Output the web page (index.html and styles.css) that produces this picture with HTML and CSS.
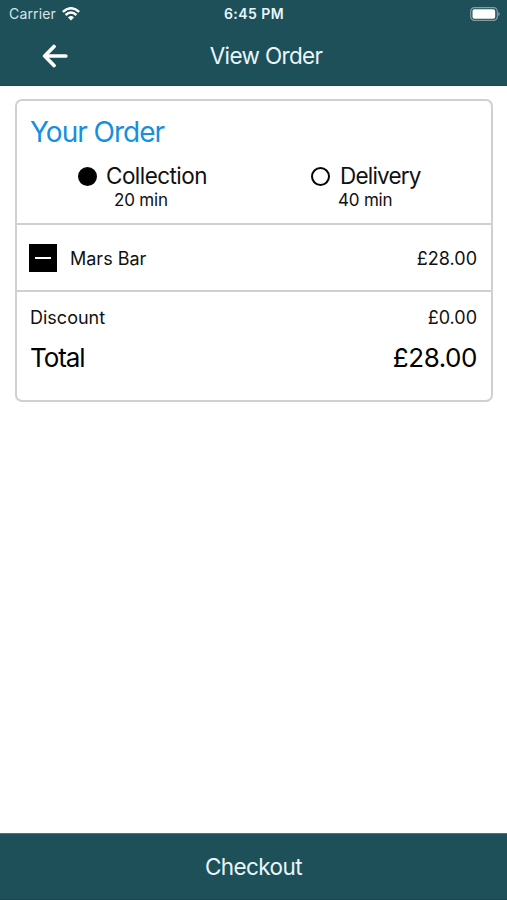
FILE: index.html
```html
<!DOCTYPE html>
<html lang="en">
<head>
<meta charset="utf-8">
<title>View Order</title>
<link rel="stylesheet" href="styles.css">
</head>
<body>
<header class="header">
  <div class="status">
    <div class="carrier"><span class="carrier-name">Carrier</span>
      <svg class="wifi" width="18" height="14" viewBox="0 0 18 14" fill="none" stroke="currentColor" stroke-width="2.5"><path d="M.8 4.9Q9-2.4 17.2 4.9M3.6 8Q9 3.1 14.4 8"/><path d="M6 10.4Q9 7.8 12 10.4L9 13.6Z" fill="currentColor" stroke="none"/></svg>
    </div>
    <span class="time">6:45 PM</span>
    <svg class="battery" width="30" height="14" viewBox="0 0 30 14"><rect x=".7" y=".7" width="26.6" height="12.6" rx="3.7" fill="none" stroke="#fff" stroke-opacity=".45" stroke-width="1.2"/><rect x="2.5" y="2.3" width="22.7" height="9.4" rx="1.8" fill="#fff"/><path d="M28.4 4.7Q31 7 28.4 9.3Z" fill="#fff" fill-opacity=".5"/></svg>
  </div>
  <nav class="nav">
    <svg class="back" width="26" height="24" viewBox="0 0 26 24" fill="none" stroke="#fff" stroke-width="3.7" stroke-linecap="round" stroke-linejoin="round"><path d="M23.8 12H3M12 2.5L2.7 12L12 21.5"/></svg>
    <h1 class="title"><span>View Order</span></h1>
  </nav>
</header>
<main class="content">
  <section class="card">
    <div class="order">
      <h2 class="heading"><span>Your Order</span></h2>
      <div class="options">
        <div class="option collection">
          <i class="radio selected"></i><span class="option-name">Collection</span>
          <span class="duration">20 min</span>
        </div>
        <div class="option delivery">
          <i class="radio"></i><span class="option-name">Delivery</span>
          <span class="duration">40 min</span>
        </div>
      </div>
    </div>
    <div class="item">
      <button class="remove" aria-label="Remove"><i></i></button>
      <span class="item-name">Mars Bar</span><span class="price">£28.00</span>
    </div>
    <div class="summary">
      <div class="row"><span class="discount">Discount</span><span class="price">£0.00</span></div>
      <div class="row total"><span class="total-name">Total</span><span class="total-price">£28.00</span></div>
    </div>
  </section>
</main>
<footer class="checkout"><span>Checkout</span></footer>
</body>
</html>
```
FILE: styles.css
```css
* { box-sizing: border-box; }
body { margin: 0; height: 900px; display: flex; flex-direction: column; background: #fff; color: #111; font-family: Inter, sans-serif; }
.header { height: 86px; background: #1e505a; color: #e8f6fa; border-bottom: 1px solid #194650; }
.status { height: 27px; padding: 0 7px 0 9px; display: grid; grid-template-columns: 1fr auto 1fr; align-items: center; }
.carrier { display: flex; align-items: center; gap: 6px; font-size: 14px; letter-spacing: .15px; color: #d7e5e9; }
.wifi { color: #fff; }
.time { font-size: 14px; font-weight: 600; letter-spacing: .45px; margin-right: 1px; }
.battery { justify-self: end; }
.nav { height: 58px; display: grid; grid-template-columns: 1fr auto 1fr; align-items: center; padding: 0 17px 0 42px; }
.title { margin: 0; padding-bottom: 2px; font-size: 22.5px; letter-spacing: -.65px; font-weight: 400; }
.content { flex: 1; padding: 13px 14px 0 15px; }
.card { height: 303px; border: 2px solid #d0d0d0; border-radius: 7px; }
.order { height: 124px; border-bottom: 2px solid #d0d0d0; padding-top: 14px; }
.heading { margin: 0 0 0 13px; font-size: 28px; line-height: 34px; letter-spacing: -1px; font-weight: 400; color: #168fdf; }
.options { display: flex; padding: 13px 0 0 61px; }
.option { display: grid; grid-template-columns: 19px auto; column-gap: 9px; align-items: center; justify-items: start; }
.collection { width: 233px; grid-template-columns: 19px 1fr; }
.delivery { column-gap: 10px; }
.radio { width: 19px; height: 19px; border: 2px solid #050505; border-radius: 50%; }
.selected { background: #000; }
.option-name { font-size: 22.5px; letter-spacing: -.55px; line-height: 28px; }
.delivery .option-name { letter-spacing: -.8px; }
.duration { grid-column: 2; font-size: 17px; letter-spacing: -.2px; line-height: 21px; }
.collection .duration { padding-left: 8px; }
.delivery .duration { margin-left: -2px; }
.item { height: 67px; border-bottom: 2px solid #d0d0d0; padding: 0 14px 0 12px; display: flex; align-items: center; font-size: 18px; }
.remove { width: 28px; height: 28px; padding: 0; border: 0; background: #000; display: grid; place-items: center; margin-right: 13px; }
.remove i { width: 16px; height: 2px; background: #fff; }
.price { margin-left: auto; }
.item-name, .item .price { padding-top: 1px; }
.summary { padding: 14px 14px 0 13px; }
.row { display: flex; justify-content: space-between; font-size: 18px; line-height: 24px; }
.total { font-size: 26px; line-height: 34px; margin-top: 11px; color: #000; }
.total-name { letter-spacing: -1.1px; }
.total-price { letter-spacing: -.45px; }
.checkout { height: 67px; background: #1e505a; border-top: 1px solid #51747c; border-bottom: 1px solid #194650; display: flex; justify-content: center; align-items: center; color: #e8f6fa; font-size: 22.5px; letter-spacing: -.6px; }
```
